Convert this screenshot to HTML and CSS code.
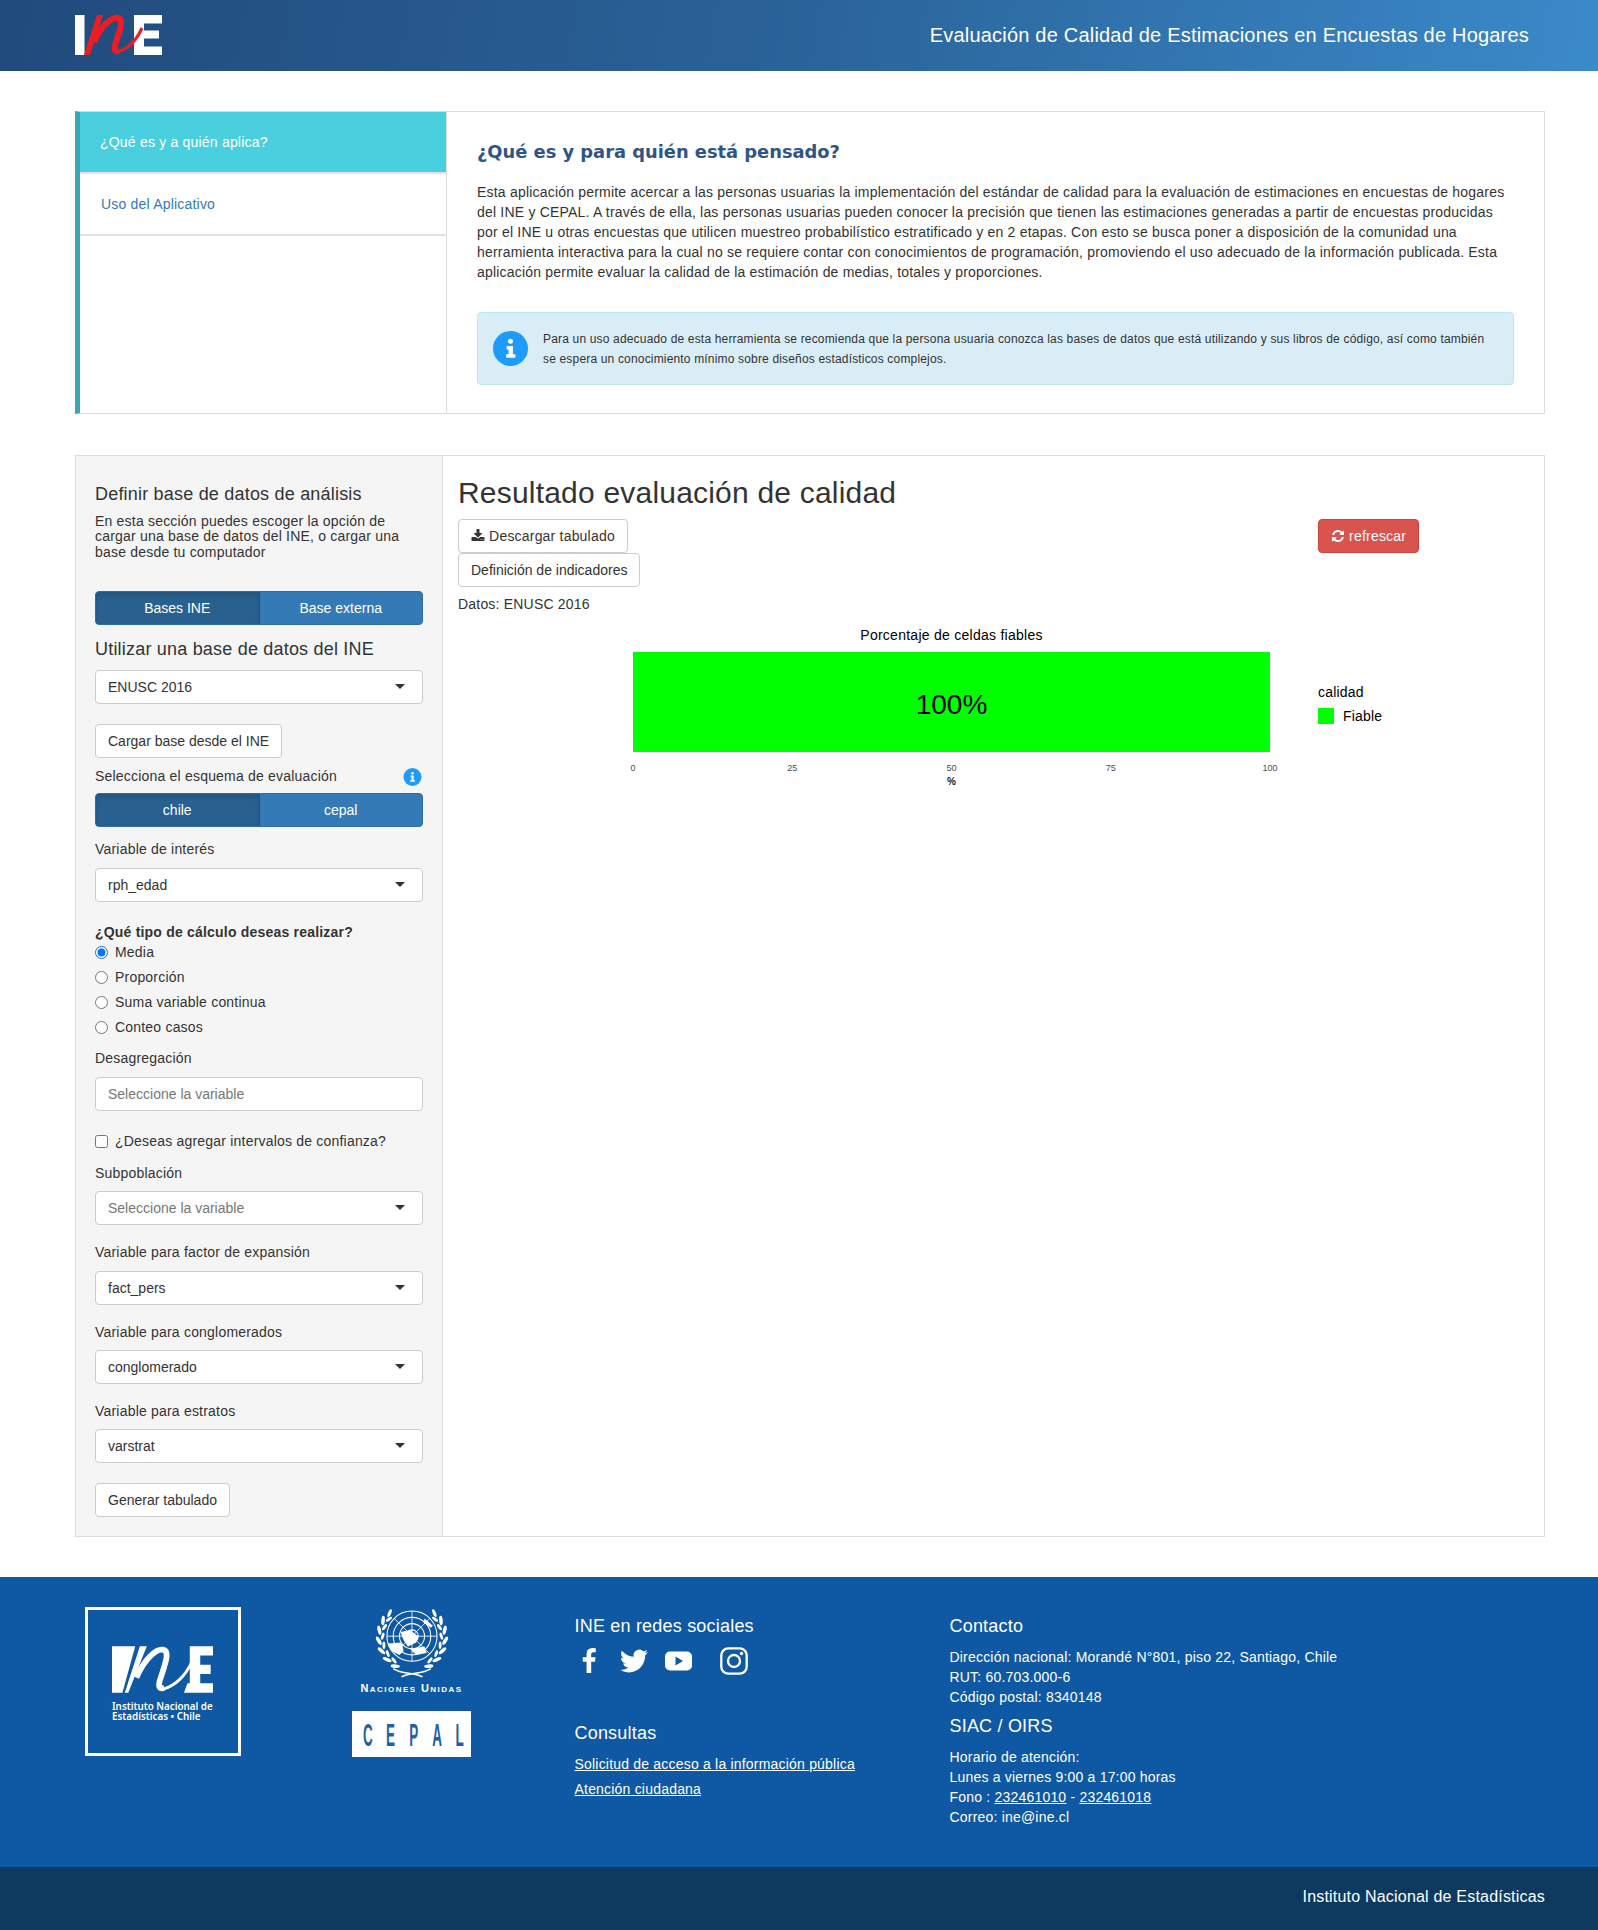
FILE: index.html
```html
<!DOCTYPE html>
<html lang="es">
<head>
<meta charset="utf-8">
<title>Evaluación de Calidad de Estimaciones en Encuestas de Hogares</title>
<link rel="stylesheet" href="styles.css">
</head>
<body>
<header class="topbar">
  <svg class="logo-head" viewBox="0 0 87 41" aria-label="INE">
    <rect x="0" y="0" width="9.5" height="40" fill="#fff"/>
    <path d="M59 0h28v8.500H69v7h15v8H69v8h18V40H59z" fill="#fff"/>
    <path d="M9 40 22 0h6L15 40z" fill="#ed1c24"/>
    <path d="M19 27C26 11 36 2 43 3c6 1 2 12-2 24-3 8-1 10 3 9" fill="none" stroke="#ed1c24" stroke-width="6"/>
    <path d="M43 36.500C53 34 61 26 67 13" fill="none" stroke="#ed1c24" stroke-width="3"/>
  </svg>
  <div class="app-title">Evaluación de Calidad de Estimaciones en Encuestas de Hogares</div>
</header>

<main class="page">
  <section class="intro">
    <nav class="intro-nav">
      <a class="intro-tab active">¿Qué es y a quién aplica?</a>
      <a class="intro-tab">Uso del Aplicativo</a>
    </nav>
    <div class="intro-body">
      <h3 class="intro-heading">¿Qué es y para quién está pensado?</h3>
      <p class="intro-text">Esta aplicación permite acercar a las personas usuarias la implementación del estándar de calidad para la evaluación de estimaciones en encuestas de hogares del INE y CEPAL. A través de ella, las personas usuarias pueden conocer la precisión que tienen las estimaciones generadas a partir de encuestas producidas por el INE u otras encuestas que utilicen muestreo probabilístico estratificado y en 2 etapas. Con esto se busca poner a disposición de la comunidad una herramienta interactiva para la cual no se requiere contar con conocimientos de programación, promoviendo el uso adecuado de la información publicada. Esta aplicación permite evaluar la calidad de la estimación de medias, totales y proporciones.</p>
      <div class="alert">
        <svg class="alert-icon" viewBox="0 0 36 36"><circle cx="18" cy="18" r="18" fill="#1e9bff"/><circle cx="18" cy="10.500" r="2.600" fill="#fff"/><path d="M14 15.500h6.500V24H23v3.500H13.500V24H16v-5h-2z" fill="#fff"/></svg>
        <p class="alert-text">Para un uso adecuado de esta herramienta se recomienda que la persona usuaria conozca las bases de datos que está utilizando y sus libros de código, así como también se espera un conocimiento mínimo sobre diseños estadísticos complejos.</p>
      </div>
    </div>
  </section>

  <section class="work">
    <aside class="side">
      <h4 class="side-title">Definir base de datos de análisis</h4>
      <p class="side-intro">En esta sección puedes escoger la opción de cargar una base de datos del INE, o cargar una base desde tu computador</p>
      <div class="toggle mt31"><span class="toggle-btn on">Bases INE</span><span class="toggle-btn">Base externa</span></div>
      <h4 class="side-title mt14">Utilizar una base de datos del INE</h4>
      <div class="select mt11">ENUSC 2016</div>
      <button class="btn mt20">Cargar base desde el INE</button>
      <div class="label-row mt7"><span>Selecciona el esquema de evaluación</span>
        <svg class="badge" viewBox="0 0 19 19"><circle cx="9.500" cy="9.500" r="9.500" fill="#1e9bff"/><circle cx="9.500" cy="5.500" r="1.300" fill="#fff"/><path d="M7.500 8h3.200v5h1.300v1.500H7v-1.500h1.500V9.500h-1z" fill="#fff"/></svg>
      </div>
      <div class="toggle mt7"><span class="toggle-btn on">chile</span><span class="toggle-btn">cepal</span></div>
      <div class="lbl mt12">Variable de interés</div>
      <div class="select mt9">rph_edad</div>
      <div class="lbl strong mt20">¿Qué tipo de cálculo deseas realizar?</div>
      <div class="radios">
        <label class="check"><input type="radio" name="calc" checked><span>Media</span></label>
        <label class="check"><input type="radio" name="calc"><span>Proporción</span></label>
        <label class="check"><input type="radio" name="calc"><span>Suma variable continua</span></label>
        <label class="check"><input type="radio" name="calc"><span>Conteo casos</span></label>
      </div>
      <div class="lbl mt11">Desagregación</div>
      <div class="input ph mt9">Seleccione la variable</div>
      <label class="check mt20"><input type="checkbox"><span>¿Deseas agregar intervalos de confianza?</span></label>
      <div class="lbl mt12">Subpoblación</div>
      <div class="select ph mt8">Seleccione la variable</div>
      <div class="lbl mt17">Variable para factor de expansión</div>
      <div class="select mt9">fact_pers</div>
      <div class="lbl mt17">Variable para conglomerados</div>
      <div class="select mt8">conglomerado</div>
      <div class="lbl mt17">Variable para estratos</div>
      <div class="select mt8">varstrat</div>
      <button class="btn mt20">Generar tabulado</button>
    </aside>

    <div class="result">
      <h2 class="result-title">Resultado evaluación de calidad</h2>
      <div class="actions">
        <div class="action-stack">
          <button class="btn btn-ico"><svg class="fa" viewBox="0 0 1792 1792"><path fill="#333" d="M1344 1344q0-26-19-45t-45-19-45 19-19 45 19 45 45 19 45-19 19-45zm256 0q0-26-19-45t-45-19-45 19-19 45 19 45 45 19 45-19 19-45zm128-224v320q0 40-28 68t-68 28h-1472q-40 0-68-28t-28-68v-320q0-40 28-68t68-28h465l135 136q58 56 136 56t136-56l136-136h464q40 0 68 28t28 68zm-325-569q17 41-14 70l-448 448q-18 19-45 19t-45-19l-448-448q-31-29-14-70 17-39 59-39h256v-448q0-26 19-45t45-19h256q26 0 45 19t19 45v448h256q42 0 59 39z"/></svg> Descargar tabulado</button>
          <button class="btn">Definición de indicadores</button>
        </div>
        <button class="btn btn-ico danger"><svg class="fa" viewBox="0 0 1792 1792"><path fill="#fff" d="M1639 1056q0 5-1 7-64 268-268 434.500t-478 166.500q-146 0-282.500-55t-243.500-157l-129 129q-19 19-45 19t-45-19-19-45v-448q0-26 19-45t45-19h448q26 0 45 19t19 45-19 45l-137 137q71 66 161 102t187 36q134 0 250-65t186-179q11-17 53-117 8-23 30-23h192q13 0 22.500 9.500t9.500 22.500zm25-800v448q0 26-19 45t-45 19h-448q-26 0-45-19t-19-45 19-45l138-138q-148-137-349-137-134 0-250 65t-186 179q-11 17-53 117-8 23-30 23h-199q-13 0-22.500-9.500t-9.500-22.500v-7q65-268 270-434.500t480-166.500q146 0 284 55.500t245 156.500l130-129q19-19 45-19t45 19 19 45z"/></svg> refrescar</button>
      </div>
      <p class="data-note">Datos: ENUSC 2016</p>
      <div class="chart">
        <div class="plot">
          <div class="plot-title">Porcentaje de celdas fiables</div>
          <div class="bar">100%</div>
          <div class="ticks"><span>0</span><span>25</span><span>50</span><span>75</span><span>100</span></div>
          <div class="axis-name">%</div>
        </div>
        <div class="legend">
          <div class="legend-title">calidad</div>
          <div class="legend-item"><i class="swatch"></i><span>Fiable</span></div>
        </div>
      </div>
    </div>
  </section>
</main>

<footer class="foot">
  <div class="foot-grid">
    <div class="ine-box">
      <svg class="ine-mark" viewBox="0 0 87 41" aria-label="INE">
        <path d="M0 0h20L9 40H0z" fill="#fff"/>
        <path d="M67 0h20v8H76v8h9v8h-9v8h11v8H62l3-8h2z" fill="#fff"/>
        <path d="M11 40 24 0h6L14 40z" fill="#fff"/>
        <path d="M21 27C28 11 38 2 44 3c6 1 2 12-2 24-3 8-1 10 3 9" fill="none" stroke="#fff" stroke-width="5"/>
        <path d="M44 37C54 34 63 26 69 13" fill="none" stroke="#fff" stroke-width="2.500"/>
      </svg>
      <div class="ine-name">Instituto Nacional de<br>Estadísticas • Chile</div>
    </div>
    <div class="un-col">
      <svg class="un-mark" viewBox="0 0 76 67" aria-hidden="true">
        <g fill="none" stroke="#fff">
          <circle cx="38" cy="26" r="24" stroke-width="1"/>
          <circle cx="38" cy="26" r="18" stroke-width="1"/>
          <circle cx="38" cy="26" r="12" stroke-width="1"/>
          <circle cx="38" cy="26" r="6" stroke-width="1"/>
          <path d="M38 2v48M14 26h48M21 9l34 34M55 9 21 43" stroke-width=".8"/>
          <path d="M20 57c9 6 19 3 28 8M56 57c-9 6-19 3-28 8" stroke-width="1.500"/>
        </g>
        <g fill="#fff">
          <path d="M15 33l13-1 2 8-4 4-8-4z"/>
          <path d="M27 22l9-2 8 6-2 6-8 4-4-6z"/>
          <path d="M36 38l14-2 2 6-10 2z"/>
          <path d="M50 9l8 7-2 2-7-5z"/>
        </g>
        <g id="wreath" fill="#fff">
          <ellipse cx="22" cy="54.700" rx="4.500" ry="1.700" transform="rotate(-175 22 54.700)"/>
          <ellipse cx="14.200" cy="48.400" rx="4.500" ry="1.700" transform="rotate(-157 14.200 48.400)"/>
          <ellipse cx="8.800" cy="40" rx="4.500" ry="1.700" transform="rotate(-139 8.800 40)"/>
          <ellipse cx="6.200" cy="30.400" rx="4.500" ry="1.700" transform="rotate(-121 6.200 30.400)"/>
          <ellipse cx="6.700" cy="20.300" rx="4.500" ry="1.700" transform="rotate(-103 6.700 20.300)"/>
          <ellipse cx="10.300" cy="11" rx="4.500" ry="1.700" transform="rotate(-85 10.300 11)"/>
          <ellipse cx="16.600" cy="4" rx="4" ry="1.500" transform="rotate(-67 16.600 4)"/>
          <ellipse cx="20.800" cy="49.100" rx="3.500" ry="1.400" transform="rotate(-127 20.800 49.100)"/>
          <ellipse cx="14.800" cy="42.700" rx="3.500" ry="1.400" transform="rotate(-109 14.800 42.700)"/>
          <ellipse cx="11.100" cy="34.700" rx="3.500" ry="1.400" transform="rotate(-91 11.100 34.700)"/>
          <ellipse cx="10" cy="26" rx="3.500" ry="1.400" transform="rotate(-73 10 26)"/>
          <ellipse cx="11.700" cy="17.400" rx="3.500" ry="1.400" transform="rotate(-55 11.700 17.400)"/>
          <ellipse cx="15.900" cy="9.800" rx="3.500" ry="1.400" transform="rotate(-37 15.900 9.800)"/>
        </g>
        <use href="#wreath" transform="matrix(-1 0 0 1 76 0)"/>
      </svg>
      <div class="un-name">Naciones Unidas</div>
      <div class="cepal">
        <svg class="cepal-svg" viewBox="0 0 119 46"><text class="cepal-word" transform="translate(11 35) scale(.42 1)" x="0 55 110 165 220">CEPAL</text></svg>
      </div>
    </div>
    <div class="foot-col">
      <h4 class="foot-h">INE en redes sociales</h4>
      <div class="socials">
        <svg class="soc soc-f" viewBox="430 0 930 1792"><path fill="#fff" d="M1343 12v264h-157q-86 0-116 36t-30 108v189h293l-39 296h-254v759h-306v-759h-255v-296h255v-218q0-186 104-288.500t277-102.500q147 0 228 12z"/></svg>
        <svg class="soc soc-t" viewBox="0 0 24 24"><path fill="#fff" d="M23.953 4.570a10 10 0 01-2.825.775 4.958 4.958 0 002.163-2.723c-.951.555-2.005.959-3.127 1.184a4.920 4.920 0 00-8.384 4.482C7.690 8.095 4.067 6.130 1.640 3.162a4.822 4.822 0 00-.666 2.475c0 1.710.870 3.213 2.188 4.096a4.904 4.904 0 01-2.228-.616v.060a4.923 4.923 0 003.946 4.827 4.996 4.996 0 01-2.212.085 4.936 4.936 0 004.604 3.417 9.867 9.867 0 01-6.102 2.105c-.390 0-.779-.023-1.170-.067a13.995 13.995 0 007.557 2.209c9.053 0 13.998-7.496 13.998-13.985 0-.210 0-.420-.015-.630A9.935 9.935 0 0024 4.590z"/></svg>
        <svg class="soc soc-y" viewBox="0 0 27 20"><rect width="27" height="19" y=".5" rx="5" fill="#fff"/><path d="M10.500 5.500 18 10l-7.500 4.500z" fill="#0f58a3"/></svg>
        <svg class="soc soc-i" viewBox="0 0 28 28"><rect x="1.300" y="1.300" width="25.400" height="25.400" rx="7" fill="none" stroke="#fff" stroke-width="2.300"/><circle cx="14" cy="14" r="6" fill="none" stroke="#fff" stroke-width="2.300"/><circle cx="21.500" cy="6.500" r="1.700" fill="#fff"/></svg>
      </div>
      <h4 class="foot-h consultas">Consultas</h4>
      <a class="foot-link first">Solicitud de acceso a la información pública</a>
      <a class="foot-link">Atención ciudadana</a>
    </div>
    <div class="foot-col">
      <h4 class="foot-h">Contacto</h4>
      <p class="foot-text c1">Dirección nacional: Morandé N°801, piso 22, Santiago, Chile<br>RUT: 60.703.000-6<br>Código postal: 8340148</p>
      <h4 class="foot-h siac">SIAC / OIRS</h4>
      <p class="foot-text c2">Horario de atención:<br>Lunes a viernes 9:00 a 17:00 horas<br>Fono : <u>232461010</u> - <u>232461018</u><br>Correo: ine@ine.cl</p>
    </div>
  </div>
</footer>
<div class="foot-bar">Instituto Nacional de Estadísticas</div>
</body>
</html>
```
FILE: styles.css
```css
* { box-sizing: border-box; }
html, body { margin: 0; padding: 0; }
body { font: 14px/20px "Liberation Sans", Arial, sans-serif; letter-spacing: .2px; color: #333; background: #fff; }
h2, h3, h4, p { margin: 0; font-weight: 400; }

.topbar { height: 71px; padding: 0 69px 0 75px; display: flex; align-items: center; justify-content: space-between; background: linear-gradient(100deg, #214a7c 0%, #2a6399 50%, #3b8aca 100%); }
.logo-head { width: 87px; height: 41px; display: block; margin-bottom: 1px; }
.app-title { font-size: 20px; line-height: 28px; color: #fff; margin-bottom: 2px; }

.page { padding: 40px 53px 0 75px; }
.intro { height: 303px; display: flex; border: 1px solid #ddd; border-left: 5px solid #3aa8b4; }
.intro-nav { width: 366px; flex: none; display: flex; flex-direction: column; }
.intro-tab { height: 62px; padding: 20px 20px 0 21px; color: #337ab7; border-bottom: 2px solid #e3e3e3; }
.intro-tab.active { height: 62px; color: #fff; background: #4acfdf; padding: 20px 20px 0; }
.intro-body { flex: 1; border-left: 1px solid #ddd; padding: 30px 30px 0; }
.intro-heading { font: 700 17.850px/20px "DejaVu Sans", sans-serif; letter-spacing: 0; color: #2f5587; }
.intro-text { margin-top: 20px; line-height: 20px; letter-spacing: .2px; }
.alert { margin-top: 30px; height: 73px; padding: 0 15px; display: flex; align-items: center; gap: 15px; background: #d9edf7; border: 1px solid #bce8f1; border-radius: 4px; }
.alert-icon { width: 35px; height: 35px; flex: none; }
.alert-text { max-width: 948px; font-size: 12px; line-height: 20px; letter-spacing: .17px; }

.work { margin-top: 41px; height: 1082px; display: flex; border: 1px solid #ddd; }
.side { width: 367px; flex: none; padding: 28px 19px 0; background: #f5f5f5; border-right: 1px solid #ddd; }
.side-title { font-size: 18px; line-height: 20px; }
.side-intro { margin-top: 10px; line-height: 15.400px; }
.mt7 { margin-top: 7px; } .mt8 { margin-top: 8px; } .mt9 { margin-top: 9px; }
.mt11 { margin-top: 11px; } .mt12 { margin-top: 12px; } .mt14 { margin-top: 14px; }
.mt17 { margin-top: 17px; } .mt20 { margin-top: 20px; } .mt31 { margin-top: 31px; }

.toggle { height: 34px; display: flex; letter-spacing: 0; border: 1px solid #2e6da4; border-radius: 4px; overflow: hidden; background: #337ab7; color: #fff; }
.toggle-btn { flex: 1; display: flex; align-items: center; justify-content: center; }
.toggle-btn.on { background: #286090; border-right: 1px solid #204d74; box-shadow: inset 0 3px 5px rgba(0, 0, 0, .125); }

.select, .input { height: 34px; padding: 0 12px; line-height: 32px; letter-spacing: 0; background: #fff; border: 1px solid #ccc; border-radius: 4px; position: relative; }
.select::after { content: ""; position: absolute; right: 17px; top: 13px; border: 5px solid transparent; border-top-color: #333; border-bottom: 0; }
.ph { color: #777; }

.btn { display: block; height: 34px; padding: 0 12px; font: inherit; letter-spacing: 0; color: #333; background: #fff; border: 1px solid #ccc; border-radius: 4px; }
.btn-ico { letter-spacing: .2px; }
.btn.danger { color: #fff; background: #d9534f; border-color: #d43f3a; }
.fa { width: 14px; height: 14px; vertical-align: -2px; }

.label-row { display: flex; justify-content: space-between; align-items: center; padding-right: 1px; }
.badge { width: 19px; height: 18px; margin-top: 3px; }
.strong { font-weight: 700; }
.radios { display: flex; flex-direction: column; gap: 5px; }
.check { display: flex; align-items: center; gap: 7px; height: 20px; }
.check input { margin: 0; width: 13px; height: 13px; flex: none; }

.result { flex: 1; padding: 20px 15px 0; }
.result-title { font-size: 30px; line-height: 33px; }
.actions { margin-top: 10px; display: grid; grid-template-columns: 860px auto; align-items: start; justify-items: start; }
.action-stack { display: flex; flex-direction: column; align-items: flex-start; }
.data-note { margin-top: 7px; }
.chart { margin-top: 11px; padding-left: 175px; display: flex; }
.plot { width: 637px; }
.plot-title { text-align: center; color: #000; letter-spacing: .26px; }
.bar { margin-top: 7px; height: 100px; background: #0f0; color: #000; font-size: 28px; letter-spacing: 0; display: flex; align-items: center; justify-content: center; padding-top: 6px; }
.ticks { margin-top: 10px; height: 12px; display: flex; justify-content: space-between; font-size: 9px; line-height: 12px; letter-spacing: 0; color: #4d4d4d; }
.ticks span { width: 0; display: flex; justify-content: center; }
.axis-name { margin-top: 1px; text-align: center; font-size: 10px; line-height: 13px; font-weight: 700; color: #222; }
.legend { margin: 57px 0 0 48px; color: #000; }
.legend-title { line-height: 20px; }
.legend-item { margin-top: 6px; display: flex; align-items: center; gap: 9px; height: 16px; }
.swatch { width: 16px; height: 16px; background: #0f0; }

.foot { margin-top: 40px; height: 290px; background: #0f58a3; color: #fff; padding: 30px 0 0 85px; }
.foot-grid { display: grid; grid-template-columns: 267px 222.500px 375px 1fr; }
.ine-box { width: 156px; height: 149px; border: 3px solid #fff; padding: 36px 0 0 24px; }
.ine-mark { width: 101px; height: 48px; display: block; }
.ine-name { margin-top: 8px; font: 600 9.800px/10px "Noto Sans", sans-serif; letter-spacing: 0; white-space: nowrap; }
.un-col { width: 119px; display: flex; flex-direction: column; align-items: center; padding-top: 2px; }
.un-mark { width: 80px; height: 70px; display: block; flex: none; }
.un-name { margin-top: 3px; font: 700 11px/12px "Liberation Sans", sans-serif; font-variant: small-caps; letter-spacing: 1.450px; white-space: nowrap; }
.cepal { margin-top: 17px; width: 119px; height: 46px; background: #fff; }
.cepal-svg { display: block; width: 119px; height: 46px; }
.cepal-word { font-size: 32px; font-weight: 700; letter-spacing: 0; fill: #1f5fa5; }
.foot-h { font-size: 18px; line-height: 20px; color: #fff; }
.foot-col { padding-top: 9px; }
.socials { margin-top: 11px; height: 28px; display: flex; align-items: center; }
.soc { display: block; }
.soc-f { width: 14px; height: 27px; margin-left: 7px; }
.soc-t { width: 28px; height: 28px; margin-left: 24px; }
.soc-y { width: 27px; height: 20px; margin-left: 17px; }
.soc-i { width: 28px; height: 28px; margin-left: 28px; }
.consultas { margin-top: 48px; }
.foot-link { display: block; color: #fff; text-decoration: underline; margin-top: 5px; }
.foot-link.first { margin-top: 11px; }
.c1 { margin-top: 11px; }
.siac { margin-top: 9px; }
.c2 { margin-top: 11px; }
.foot-bar { height: 63px; background: #0e3a60; color: #fff; font-size: 16px; line-height: 60px; text-align: right; padding-right: 53px; }
```
